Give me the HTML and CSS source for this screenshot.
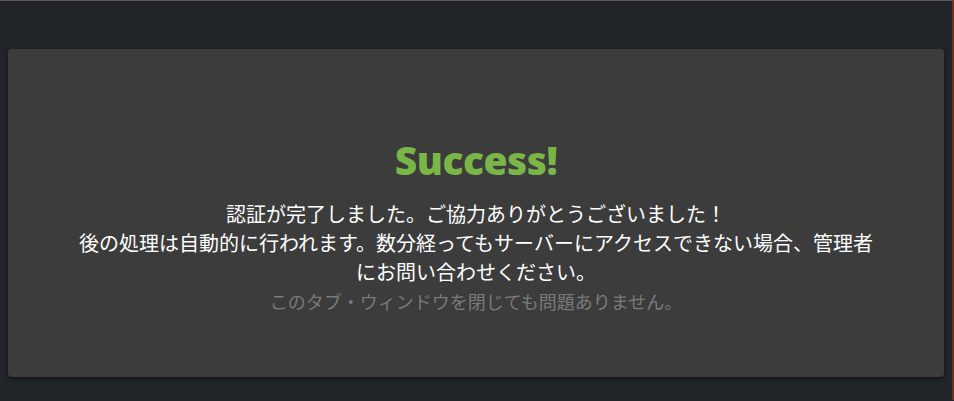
FILE: index.html
```html
<!DOCTYPE html>
<html lang="ja">
<head>
<meta charset="utf-8">
<title>Success</title>
<link rel="stylesheet" href="styles.css">
</head>
<body>
  <main class="card">
    <h1 class="title">Success!</h1>
    <div class="message">
      <p class="line">認証が完了しました。ご協力ありがとうございました！</p>
      <p class="line">後の処理は自動的に行われます。数分経ってもサーバーにアクセスできない場合、管理者にお問い合わせください。</p>
      <p class="note">このタブ・ウィンドウを閉じても問題ありません。</p>
    </div>
  </main>
</body>
</html>
```
FILE: styles.css
```css
html {
  background: #212428;
}
body {
  margin: 0;
  min-height: 400px;
  box-sizing: border-box;
  border-top: 1px solid #5a5a5a;
  border-right: 2px solid #6e3020;
  padding: 48px 8px 0 8px;
  background: #212428;
  font-family: "Noto Sans CJK JP", "Noto Sans", sans-serif;
}
.card {
  height: 328px;
  box-sizing: border-box;
  background: #3c3c3c;
  border-radius: 4px;
  box-shadow: 0 2px 4px rgba(0, 0, 0, 0.45);
  padding-top: 86px;
  display: flex;
  flex-direction: column;
  align-items: center;
  text-align: center;
}
.title {
  margin: 0;
  font-family: "Open Sans", "Lato", sans-serif;
  font-weight: 800;
  font-size: 39px;
  line-height: 50px;
  letter-spacing: -0.5px;
  color: #7ab547;
}
.message {
  margin-top: 14px;
  max-width: 808px;
}
.line {
  margin: 0;
  color: #ffffff;
  font-size: 20px;
  line-height: 29px;
}
.note {
  margin: 0;
  color: #7a7a7a;
  font-size: 18px;
  line-height: 30px;
}
```
